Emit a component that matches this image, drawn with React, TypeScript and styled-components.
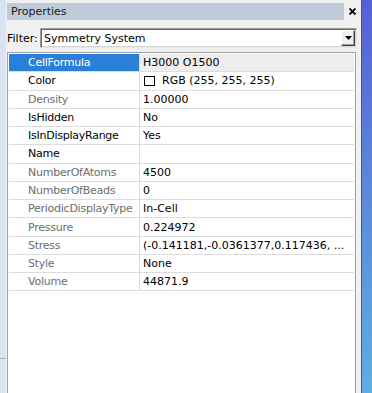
import * as React from "react"
import styled, { createGlobalStyle } from "styled-components"

interface Property {
  name: string
  value: string
  readOnly?: boolean
  swatch?: string
}

const properties: Property[] = [
  { name: "CellFormula", value: "H3000 O1500" },
  { name: "Color", value: "RGB (255, 255, 255)", swatch: "#ffffff" },
  { name: "Density", value: "1.00000", readOnly: true },
  { name: "IsHidden", value: "No" },
  { name: "IsInDisplayRange", value: "Yes" },
  { name: "Name", value: "" },
  { name: "NumberOfAtoms", value: "4500", readOnly: true },
  { name: "NumberOfBeads", value: "0", readOnly: true },
  { name: "PeriodicDisplayType", value: "In-Cell", readOnly: true },
  { name: "Pressure", value: "0.224972", readOnly: true },
  { name: "Stress", value: "(-0.141181,-0.0361377,0.117436, ...", readOnly: true },
  { name: "Style", value: "None", readOnly: true },
  { name: "Volume", value: "44871.9", readOnly: true },
]

const GlobalStyle = createGlobalStyle`
  html, body {
    margin: 0;
    padding: 0;
    width: 372px;
    height: 393px;
    overflow: hidden;
    background: #f0f0f0;
  }
  body {
    font: 11px "DejaVu Sans", Verdana, sans-serif;
    color: #000;
  }
`

const Window = styled.div`
  display: flex;
  width: 372px;
  height: 393px;
`

const LeftStrip = styled.div`
  width: 6px;
  flex-shrink: 0;
  background: linear-gradient(
    180deg,
    #d9e4f3 0,
    #d9e4f3 358px,
    #a9b5c5 358px,
    #a9b5c5 359px,
    #d9e4f3 359px
  );
`

const Panel = styled.div`
  width: 355px;
  background: #f0f0f0;
  display: flex;
  flex-direction: column;
  flex-shrink: 0;
`

const RightEdge = styled.div`
  width: 1px;
  background: #5a5a5a;
  flex-shrink: 0;
`

const DesktopEdge = styled.div`
  flex: 1;
  background: linear-gradient(180deg, #5760d6 0%, #5b86da 45%, #5eaee0 100%);
`

const TitleRow = styled.div`
  display: flex;
  align-items: center;
  margin: 3px 0 0 1px;
  height: 17px;
`

const TitleBar = styled.div`
  width: 337px;
  height: 17px;
  background: #bfcbd8;
  display: flex;
  align-items: center;
  padding-left: 4px;
  box-sizing: border-box;
  color: #1a1a1a;
`

const CloseButton = styled.div`
  flex: 1;
  display: flex;
  align-items: center;
  justify-content: center;
  height: 17px;
`

const FilterRow = styled.div`
  display: flex;
  align-items: center;
  margin: 8px 0 0 1px;
  height: 20px;
`

const FilterLabel = styled.span`
  width: 33px;
`

const Combo = styled.div`
  width: 317px;
  height: 20px;
  box-sizing: border-box;
  border: 1px solid;
  border-color: #9a9a9a #e8e8e8 #e8e8e8 #9a9a9a;
  box-shadow: inset 1px 1px 0 #6a6a6a, inset -1px -1px 0 #d4d4d4;
  background: #fff;
  display: flex;
  align-items: center;
  padding: 0 1px 0 3px;
`

const ComboText = styled.span`
  flex: 1;
`

const DropButton = styled.div`
  width: 14px;
  height: 16px;
  box-sizing: border-box;
  background: #f0f0f0;
  border: 1px solid;
  border-color: #ffffff #404040 #404040 #ffffff;
  box-shadow: inset -1px -1px 0 #a0a0a0;
  display: flex;
  align-items: center;
  justify-content: center;
`

const Grid = styled.div`
  margin: 4px 0 0 1px;
  width: 349px;
  flex: 1;
  box-sizing: border-box;
  border: 1px solid #a0a0a0;
  border-bottom: none;
  background: #fff;
  padding: 1px 1px 0 1px;
`

const Row = styled.div`
  display: flex;
  height: 18.28px;
  box-sizing: border-box;
  border-bottom: 1px solid #dcdcdc;
`

const NameCell = styled.div<{ $selected?: boolean; $readOnly?: boolean }>`
  width: 131px;
  box-sizing: border-box;
  border-right: 1px solid #dcdcdc;
  padding-left: 19px;
  display: flex;
  align-items: center;
  letter-spacing: -0.25px;
  background: ${p => (p.$selected ? "#2a7fd9" : "#fff")};
  color: ${p => (p.$selected ? "#fff" : p.$readOnly ? "#6d6d6d" : "#000")};
  white-space: nowrap;
  overflow: hidden;
`

const ValueCell = styled.div<{ $selected?: boolean }>`
  flex: 1;
  padding-left: 3px;
  display: flex;
  align-items: center;
  background: ${p => (p.$selected ? "#eeeeee" : "#fff")};
  white-space: nowrap;
  overflow: hidden;
`

const Swatch = styled.span<{ $color: string }>`
  width: 11px;
  height: 10px;
  box-sizing: border-box;
  border: 1px solid #000;
  background: ${p => p.$color};
  margin: 0 7px 0 1px;
`

export default function App() {
  return (
    <Window>
      <GlobalStyle />
      <LeftStrip />
      <Panel>
        <TitleRow>
          <TitleBar>Properties</TitleBar>
          <CloseButton>
            <svg width="7" height="7" viewBox="0 0 7 7">
              <path d="M0.5 0.5 L6.5 6.5 M6.5 0.5 L0.5 6.5" stroke="#000" strokeWidth="1.8" />
            </svg>
          </CloseButton>
        </TitleRow>
        <FilterRow>
          <FilterLabel>Filter:</FilterLabel>
          <Combo>
            <ComboText>Symmetry System</ComboText>
            <DropButton>
              <svg width="7" height="4" viewBox="0 0 7 4">
                <path d="M0 0 H7 L3.5 4 Z" fill="#000" />
              </svg>
            </DropButton>
          </Combo>
        </FilterRow>
        <Grid>
          {properties.map((p, i) => (
            <Row key={p.name}>
              <NameCell $selected={i === 0} $readOnly={p.readOnly}>
                {p.name}
              </NameCell>
              <ValueCell $selected={i === 0}>
                {p.swatch && <Swatch $color={p.swatch} />}
                {p.value}
              </ValueCell>
            </Row>
          ))}
        </Grid>
      </Panel>
      <RightEdge />
      <DesktopEdge />
    </Window>
  )
}
